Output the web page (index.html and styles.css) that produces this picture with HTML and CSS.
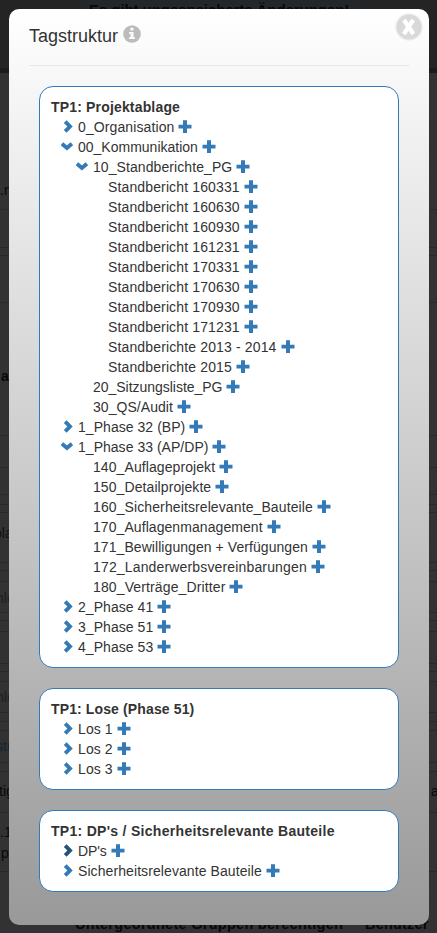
FILE: index.html
```html
<!DOCTYPE html>
<html lang="de">
<head>
<meta charset="utf-8">
<title>Tagstruktur</title>
<link rel="stylesheet" href="styles.css">
</head>
<body>
<div class="page" id="page">
  <div class="band"></div>
  <b class="under notice">Es gibt ungespeicherte Änderungen!</b>
  <b class="under groups">Untergeordnete Gruppen berechtigen</b>
  <b class="under user">Benutzer</b>
</div>
<main class="modal">
  <header class="header">
    <h1>Tagstruktur</h1>
    <svg class="info" viewBox="0 0 18 18"><circle cx="9" cy="9" r="8.8" fill="#bcbcbc"/><path d="M7.3 2.8h3.2v2.8H7.3zM6 7h4.6v5.2H12v1.9H6v-1.9h1.5V8.8H6z" fill="#fafafa"/></svg>
    <svg class="close" viewBox="0 0 28 28"><circle cx="14" cy="14" r="13.7" fill="#eee"/><circle cx="14" cy="14" r="12.5" fill="#d9d9d9"/><path d="M9 7l9.4 14M18.2 7L8.8 21" stroke="#fff" stroke-width="4.4"/></svg>
  </header>
  <div class="cards" id="cards"></div>
</main>
<script src="tree.js"></script>
</body>
</html>
```
FILE: styles.css
```css
* { box-sizing: border-box; }
body {
  margin: 0;
  height: 933px;
  overflow: hidden;
  background: #323232;
  color: #333;
  font: 14px/20px "Liberation Sans", Arial, sans-serif;
}
.page { position: absolute; inset: 0; overflow: hidden; }
.band {
  height: 73px;
  background: linear-gradient(90deg, #242424 80px, #23272a 80px, #23272a 360px, #242424 360px);
  border-bottom: 5px solid #1c1c1c;
}
.under { position: absolute; color: #080808; white-space: nowrap; }
.notice { left: 89px; top: 0; font-size: 15px; letter-spacing: -.07px; }
.groups { left: 75px; top: 914px; font-size: 14.5px; letter-spacing: .28px; }
.user { left: 365px; top: 914px; font-size: 14.5px; letter-spacing: .2px; }
.rule { position: absolute; left: 0; width: 100%; height: 1px; background: #292929; }
.modal {
  position: relative;
  width: 420px;
  height: 916px;
  margin: 9px 0 0 9px;
  padding: 0 20px;
  border-radius: 10px;
  background: linear-gradient(#fff, #999);
}
.header {
  position: relative;
  display: flex;
  height: 57px;
  padding-top: 16px;
  border-bottom: 1px solid #e8e8e8;
}
h1 { margin: 1px 0 0; font-size: 18px; font-weight: 400; line-height: 20px; height: 20px; }
.info { width: 18px; height: 18px; margin: 0 0 0 5px; }
.close { position: absolute; width: 28px; height: 28px; right: -14px; top: 4px; }
.cards { display: flex; flex-direction: column; gap: 20px; padding: 20px 10px 0; }
.card {
  padding: 10px 11px;
  border: 1px solid #337ab7;
  border-radius: 14px;
  background: #fff;
}
.card h2 { margin: 0; font-size: 14px; line-height: 20px; white-space: nowrap; }
.row { display: flex; align-items: center; height: 20px; white-space: nowrap; }
.level1 { padding-left: 10px; }
.level2 { padding-left: 25px; }
.level3 { padding-left: 40px; }
.toggle { width: 14px; height: 14px; margin-right: 3px; fill: none; stroke: #337ab7; stroke-width: 3.9; }
.toggle.active { stroke: #23527c; }
.plus { width: 14px; height: 14px; margin-left: 4px; fill: #337ab7; }
```
FILE: tree.js
```js
// Each entry: level, state (">" closed, "v" open, "" leaf, "!" focused), label, extra label width in px
const groups = [
  ["TP1: Projektablage", 3, [
    [1, ">", "0_Organisation", 1.5], [1, "v", "00_Kommunikation", 0], [2, "v", "10_Standberichte_PG", 1.5],
    [3, "", "Standbericht 160331", 2.5], [3, "", "Standbericht 160630", 2.5], [3, "", "Standbericht 160930", 2.5],
    [3, "", "Standbericht 161231", 2.5], [3, "", "Standbericht 170331", 2.5], [3, "", "Standbericht 170630", 2.5],
    [3, "", "Standbericht 170930", 2.5], [3, "", "Standbericht 171231", 2.5],
    [3, "", "Standberichte 2013 - 2014", 3.5], [3, "", "Standberichte 2015", 2.5],
    [2, "", "20_Sitzungsliste_PG", -0.5], [2, "", "30_QS/Audit", 0.5],
    [1, ">", "1_Phase 32 (BP)", 0.7], [1, "v", "1_Phase 33 (AP/DP)", 0.5],
    [2, "", "140_Auflageprojekt", 1.5], [2, "", "150_Detailprojekte", 1.5],
    [2, "", "160_Sicherheitsrelevante_Bauteile", 3.5], [2, "", "170_Auflagenmanagement", 1.5],
    [2, "", "171_Bewilligungen + Verfügungen", 2], [2, "", "172_Landerwerbsvereinbarungen", 4.5],
    [2, "", "180_Verträge_Dritter", 2.5],
    [1, ">", "2_Phase 41", 0.5], [1, ">", "3_Phase 51", 0.5], [1, ">", "4_Phase 53", 0.5]
  ]],
  ["TP1: Lose (Phase 51)", 2.5, [[1, ">", "Los 1", 0.5], [1, ">", "Los 2", 0.5], [1, ">", "Los 3", 0.5]]],
  ["TP1: DP's / Sicherheitsrelevante Bauteile", 12, [[1, "!", "DP's", -0.5], [1, ">", "Sicherheitsrelevante Bauteile", 2.5]]]
];

const toggle = state => `<svg class="toggle${state === "!" ? " active" : ""}" viewBox="0 0 14 14"><path d="${
  state === "v" ? "M.9 3.7L5.9 8L10.9 3.7" : state ? "M4.2 1.6L9 6.5L4.2 11.4" : ""}"/></svg>`;
const plus = `<svg class="plus" viewBox="0 0 14 14"><path d="M5 .2h4v4.5h4.5v3.8H9V13H5V8.5H.5V4.7H5z"/></svg>`;
const spacing = (label, extra) => `style="letter-spacing:${(extra / label.length).toFixed(3)}px"`;

document.getElementById("cards").innerHTML = groups.map(([title, extra, rows]) =>
  `<section class="card"><h2 ${spacing(title, extra)}>${title}</h2>${rows.map(([level, state, label, extra]) =>
    `<div class="row level${level}">${toggle(state)}<span ${spacing(label, extra)}>${label}</span>${plus}</div>`).join("")}</section>`
).join("");

// Page behind the dialog: table rules and the text at its edges
const page = document.getElementById("page");
for (const y of [209, 247, 255, 302, 435, 467, 494, 504, 512, 562, 570, 581, 612, 620, 631, 663, 671, 681, 712, 721, 730, 762, 771, 812, 871]) {
  page.insertAdjacentHTML("beforeend", `<i class="rule" style="top:${y}px"></i>`);
}
for (const [x, y, text, color, weight] of [
  [0, 180, ".n", "#080808", 400], [1, 366, "a", "#080808", 700], [-6, 523, "pla", "#101010", 400],
  [-4, 588, "hle", "#202020", 400], [-4, 687, "hle", "#202020", 400], [-4, 736, "str", "#142331", 400],
  [-1, 781, "tig", "#080808", 400], [0, 822, ".1", "#080808", 400], [1, 843, "p", "#080808", 400],
  [431, 781, "a", "#080808", 400]
]) {
  page.insertAdjacentHTML("beforeend", `<span class="under" style="left:${x}px;top:${y}px;color:${color};font-weight:${weight}">${text}</span>`);
}
```
